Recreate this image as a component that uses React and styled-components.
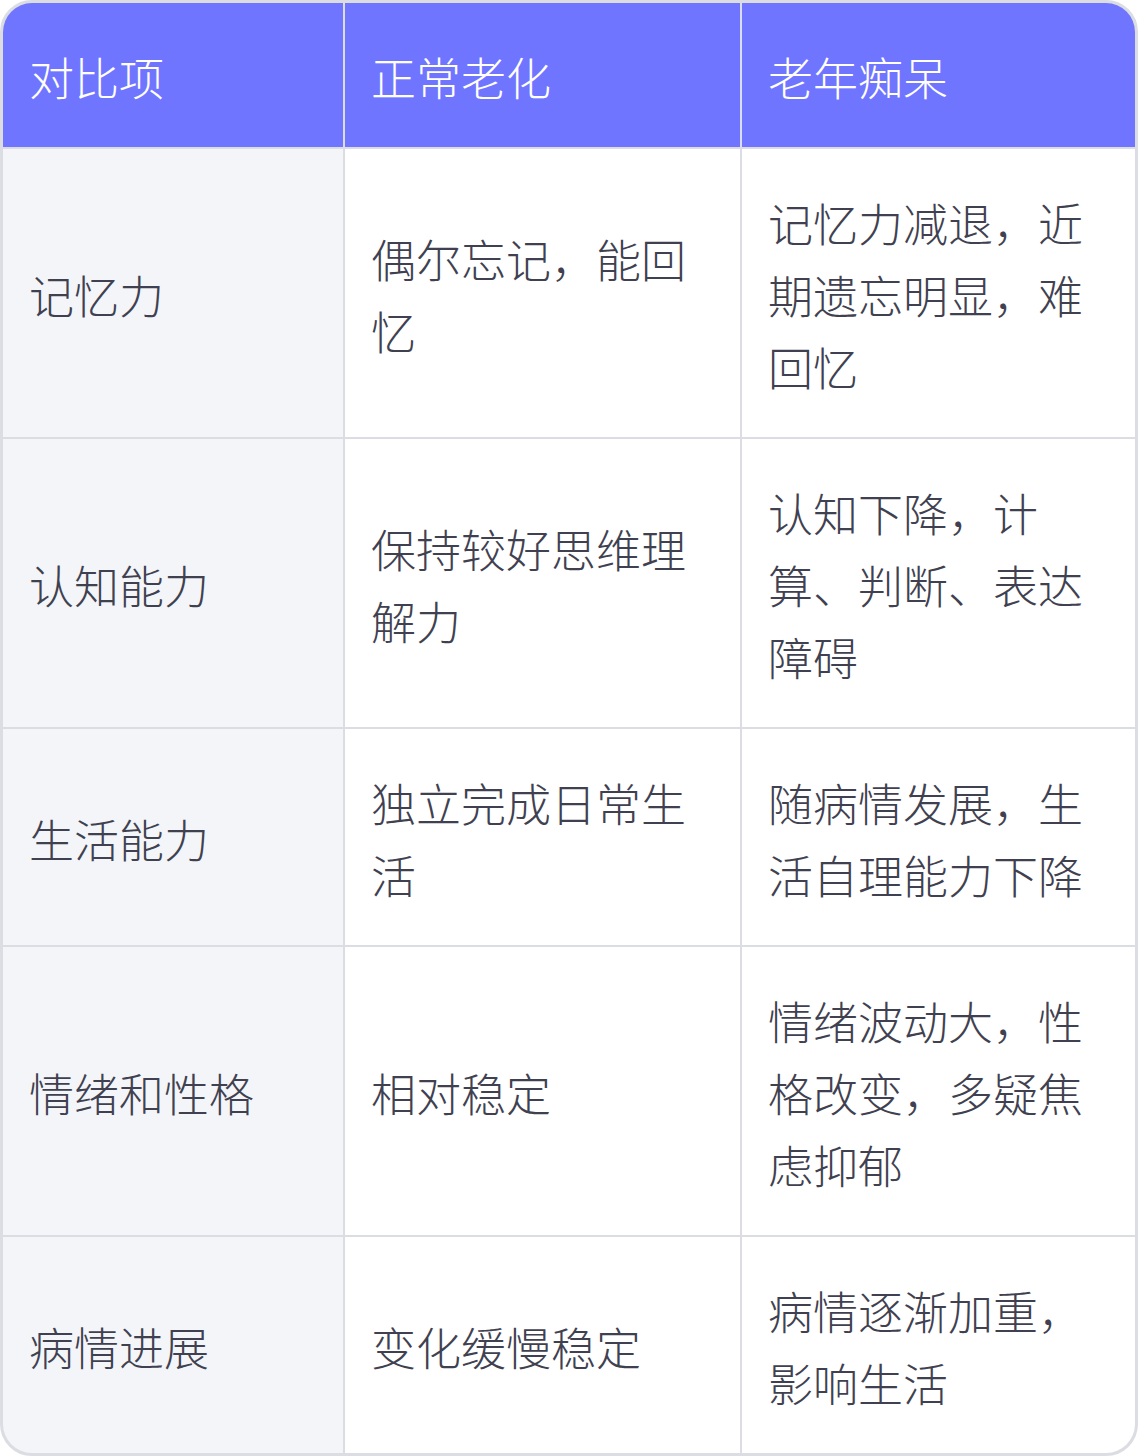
import React from "react";
import styled, { createGlobalStyle } from "styled-components";

const Global = createGlobalStyle`
  html, body { margin: 0; padding: 0; background: #ffffff; }
  body { font-family: "Noto Sans CJK SC", "Noto Sans", sans-serif; }
`;

const Table = styled.div`
  box-sizing: border-box;
  width: 1138px;
  display: grid;
  grid-template-columns: 340px 395px 1fr;
  gap: 2px;
  background: #dcdde3;
  border: 3px solid #dcdde3;
  border-radius: 32px;
  overflow: hidden;
`;

const Cell = styled.div`
  display: flex;
  align-items: center;
  padding: 38px 26px 34px;
  font-size: 45px;
  line-height: 72px;
  font-weight: 300;
  color: ${(p) => (p.$header ? "#ffffff" : "#3f4150")};
  background: ${(p) => (p.$header ? "#7075ff" : p.$first ? "#f4f5f9" : "#ffffff")};
  word-break: break-all;
`;

const header = ["对比项", "正常老化", "老年痴呆"];
const rows = [
  ["记忆力", "偶尔忘记，能回忆", "记忆力减退，近期遗忘明显，难回忆"],
  ["认知能力", "保持较好思维理解力", "认知下降，计算、判断、表达障碍"],
  ["生活能力", "独立完成日常生活", "随病情发展，生活自理能力下降"],
  ["情绪和性格", "相对稳定", "情绪波动大，性格改变，多疑焦虑抑郁"],
  ["病情进展", "变化缓慢稳定", "病情逐渐加重，影响生活"],
];

export default function App() {
  return (
    <>
      <Global />
      <Table>
        {header.map((h) => (
          <Cell key={h} $header>
            {h}
          </Cell>
        ))}
        {rows.map((r) =>
          r.map((c, i) => (
            <Cell key={r[0] + i} $first={i === 0}>
              {c}
            </Cell>
          ))
        )}
      </Table>
    </>
  );
}
